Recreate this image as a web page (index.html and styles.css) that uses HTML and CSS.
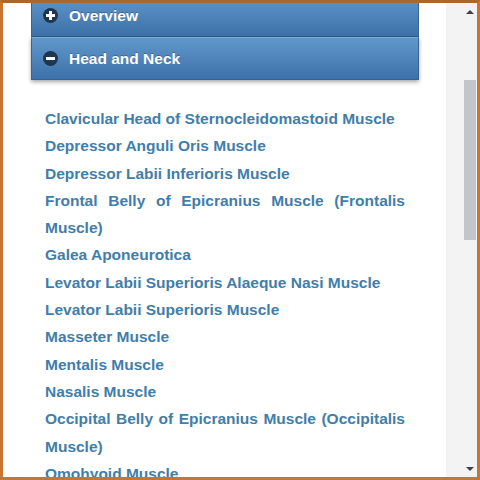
FILE: index.html
```html
<!DOCTYPE html>
<html>
<head>
<meta charset="utf-8">
<link rel="stylesheet" href="styles.css">
</head>
<body>
<div class="frame">
  <div class="main">
    <div class="accordion">
      <div class="bar bar-closed"><span class="ico"><span class="ico-h"></span><span class="ico-v"></span></span><span class="bar-label">Overview</span></div>
      <div class="bar bar-open"><span class="ico"><span class="ico-h"></span></span><span class="bar-label">Head and Neck</span></div>
    </div>
    <div class="list">
      <a class="item">Clavicular Head of Sternocleidomastoid Muscle</a>
      <a class="item">Depressor Anguli Oris Muscle</a>
      <a class="item">Depressor Labii Inferioris Muscle</a>
      <a class="item">Frontal Belly of Epicranius Muscle (Frontalis Muscle)</a>
      <a class="item">Galea Aponeurotica</a>
      <a class="item">Levator Labii Superioris Alaeque Nasi Muscle</a>
      <a class="item">Levator Labii Superioris Muscle</a>
      <a class="item">Masseter Muscle</a>
      <a class="item">Mentalis Muscle</a>
      <a class="item">Nasalis Muscle</a>
      <a class="item">Occipital Belly of Epicranius Muscle (Occipitalis Muscle)</a>
      <a class="item">Omohyoid Muscle</a>
    </div>
  </div>
  <div class="side">
    <div class="scrollbar">
      <div class="arrow-box"><span class="arrow-up"></span></div>
      <div class="track"><div class="thumb"></div></div>
      <div class="arrow-box"><span class="arrow-down"></span></div>
    </div>
  </div>
</div>
</body>
</html>
```
FILE: styles.css
```css
html, body {
  margin: 0;
  padding: 0;
  background: #ffffff;
}
.frame {
  width: 480px;
  height: 480px;
  box-sizing: border-box;
  border: 3px solid #c8762f;
  border-top-color: #a8682e;
  display: flex;
  overflow: hidden;
  background: #ffffff;
}
.main {
  width: 443px;
  flex: none;
  overflow: hidden;
  font-family: "Liberation Sans", Arial, sans-serif;
}
.accordion {
  margin: -9px 0 0 28px;
  width: 388px;
  display: flex;
  flex-direction: column;
}
.bar {
  height: 43px;
  box-sizing: border-box;
  display: flex;
  align-items: center;
  padding-left: 11px;
  background: linear-gradient(#6098cb, #3d71a9);
  border: 1px solid #33659a;
  color: #ffffff;
  font-weight: bold;
  font-size: 15.5px;
  text-shadow: 0 -1px 0 rgba(0, 0, 0, 0.25);
}
.bar-closed {
  border-bottom-color: #2f5d8f;
}
.bar-open {
  border-top: 1px solid #7aaad6;
  box-shadow: 0 2px 4px rgba(0, 0, 0, 0.35);
}
.ico {
  width: 15px;
  height: 15px;
  border-radius: 50%;
  background: #1f3652;
  position: relative;
  margin-right: 11px;
  flex: none;
}
.ico-h {
  position: absolute;
  left: 3px;
  top: 6px;
  width: 9px;
  height: 3px;
  background: #ffffff;
}
.ico-v {
  position: absolute;
  left: 6px;
  top: 3px;
  width: 3px;
  height: 9px;
  background: #ffffff;
}
.bar-label {
  line-height: 1;
}
.list {
  margin: 25px 0 0 42px;
  width: 360px;
  display: flex;
  flex-direction: column;
}
.item {
  display: block;
  color: #3f7eaa;
  font-weight: bold;
  font-size: 15.5px;
  line-height: 27.3px;
  text-align: justify;
  text-decoration: none;
}
.side {
  flex: 1;
  background: #f3f3f3;
  display: flex;
  justify-content: flex-end;
}
.scrollbar {
  width: 14px;
  display: flex;
  flex-direction: column;
}
.arrow-box {
  height: 17px;
  display: flex;
  align-items: center;
  justify-content: center;
  flex: none;
}
.arrow-up {
  width: 0;
  height: 0;
  border-left: 4px solid transparent;
  border-right: 4px solid transparent;
  border-bottom: 4px solid #404040;
}
.arrow-down {
  width: 0;
  height: 0;
  border-left: 4px solid transparent;
  border-right: 4px solid transparent;
  border-top: 4px solid #404040;
}
.track {
  flex: 1;
  padding: 60px 1px 0 1px;
}
.thumb {
  height: 160px;
  background: #c2c6c9;
}
```
